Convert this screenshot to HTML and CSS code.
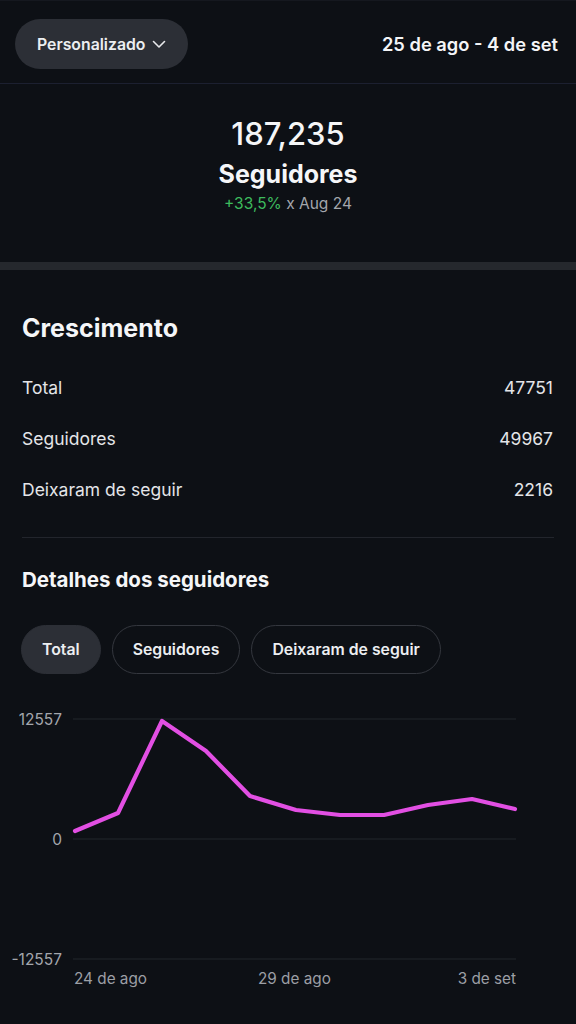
FILE: index.html
```html
<!DOCTYPE html>
<html lang="pt">
<head>
<meta charset="utf-8">
<link rel="stylesheet" href="styles.css">
</head>
<body>
<div class="app">
  <header class="topbar">
    <button class="range-pill">Personalizado
      <svg class="chev" width="14" height="9" viewBox="0 0 14 9"><path d="M1.5 1.5 L7 7 L12.5 1.5" fill="none" stroke="#e8e9ec" stroke-width="1.6" stroke-linecap="round" stroke-linejoin="round"/></svg>
    </button>
    <div class="date-range">25 de ago - 4 de set</div>
  </header>

  <section class="summary">
    <div class="big-num">187,235</div>
    <div class="big-label">Seguidores</div>
    <div class="delta"><span class="up">+33,5%</span> x Aug 24</div>
  </section>

  <div class="thick-sep"></div>

  <section class="growth">
    <h2 class="sec-title">Crescimento</h2>
    <div class="stat-row"><span>Total</span><span>47751</span></div>
    <div class="stat-row"><span>Seguidores</span><span>49967</span></div>
    <div class="stat-row"><span>Deixaram de seguir</span><span>2216</span></div>
    <div class="divider"></div>
    <h3 class="sub-title">Detalhes dos seguidores</h3>
    <div class="chips">
      <button class="chip active">Total</button>
      <button class="chip">Seguidores</button>
      <button class="chip">Deixaram de seguir</button>
    </div>
  </section>

  <section class="chart">
    <svg width="576" height="300" viewBox="0 700 576 300">
      <g stroke="#23262c" stroke-width="1.2">
        <line x1="73" y1="718" x2="516" y2="718"/>
        <line x1="73" y1="838" x2="516" y2="838"/>
        <line x1="73" y1="958" x2="516" y2="958"/>
      </g>
      <g class="ylab" text-anchor="end">
        <text x="62" y="724">12557</text>
        <text x="62" y="844">0</text>
        <text x="62" y="964">-12557</text>
      </g>
      <polyline fill="none" stroke="#e24fe3" stroke-width="4.2" stroke-linejoin="round" stroke-linecap="round"
        points="75,830 118,812 162,720 206,750 250,795 296,809 340,814 384,814 428,804 472,798 515,808"/>
      <g class="xlab">
        <text x="74" y="983">24 de ago</text>
        <text x="258" y="983">29 de ago</text>
        <text x="516" y="983" text-anchor="end">3 de set</text>
      </g>
    </svg>
  </section>
</div>
</body>
</html>
```

FILE: styles.css
```css
* { box-sizing: border-box; }
html, body { margin: 0; padding: 0; }
body {
  background: #0d1015;
  color: #f2f3f5;
  font-family: Inter, "Noto Sans", "Liberation Sans", sans-serif;
  width: 576px;
  height: 1024px;
  overflow: hidden;
}
.app { width: 576px; }

.topbar {
  display: flex;
  align-items: center;
  justify-content: space-between;
  height: 84px;
  padding: 0 18px 0 15px;
  border-top: 1px solid #15181f;
  border-bottom: 1px solid #1c2030;
}
.range-pill {
  display: flex;
  align-items: center;
  gap: 7px;
  height: 50px;
  padding: 0 22px 0 22px;
  background: #2c2f36;
  border: none;
  border-radius: 25px;
  color: #eceef1;
  font-family: inherit;
  font-size: 15.8px;
  font-weight: 600;
  margin-top: 4px;
}
.chev { margin-top: 1px; }
.date-range {
  font-size: 18.3px;
  font-weight: 600;
  color: #f4f5f7;
  margin-top: 4px;
}

.summary {
  display: flex;
  flex-direction: column;
  align-items: center;
  height: 178px;
  padding-top: 31px;
}
.big-num {
  font-size: 31px;
  font-weight: 500;
  line-height: 38px;
  color: #f5f6f8;
}
.big-label {
  font-size: 25px;
  font-weight: 700;
  line-height: 30px;
  margin-top: 6px;
  color: #f5f6f8;
}
.delta {
  font-size: 15.5px;
  line-height: 20px;
  color: #a3a6ac;
  margin-top: 5px;
}
.delta .up { color: #3dbb5e; }

.thick-sep {
  height: 8px;
  background: #25282d;
}

.growth {
  padding: 0 22px 0 22px;
}
.sec-title {
  margin: 0;
  padding-top: 43px;
  font-size: 25px;
  font-weight: 700;
  line-height: 30px;
  color: #f5f6f8;
}
.stat-row {
  display: flex;
  justify-content: space-between;
  font-size: 17.5px;
  line-height: 24px;
  color: #e4e5e8;
  padding-right: 1px;
}
.stat-row:first-of-type { margin-top: 33px; }
.stat-row + .stat-row { margin-top: 27px; }
.divider {
  height: 1px;
  background: #22252c;
  margin-top: 35px;
}
.sub-title {
  margin: 29px 0 0 0;
  font-size: 20.5px;
  font-weight: 700;
  line-height: 26px;
  color: #f5f6f8;
}
.chips {
  display: flex;
  gap: 11px;
  margin-top: 32px;
  margin-left: -1px;
}
.chip {
  height: 49px;
  padding: 0 20px;
  border-radius: 25px;
  border: 1px solid #34373e;
  background: transparent;
  color: #eceef1;
  font-family: inherit;
  font-size: 15.8px;
  font-weight: 600;
}
.chip.active {
  background: #2c2f36;
  border-color: #2c2f36;
}

.chart {
  margin-top: 27px;
}
.chart svg { display: block; }
.ylab text {
  font-family: Inter, "Noto Sans", sans-serif;
  font-size: 15.5px;
  fill: #a3a6ac;
}
.xlab text {
  font-family: Inter, "Noto Sans", sans-serif;
  font-size: 15.3px;
  fill: #9c9fa5;
}
```
